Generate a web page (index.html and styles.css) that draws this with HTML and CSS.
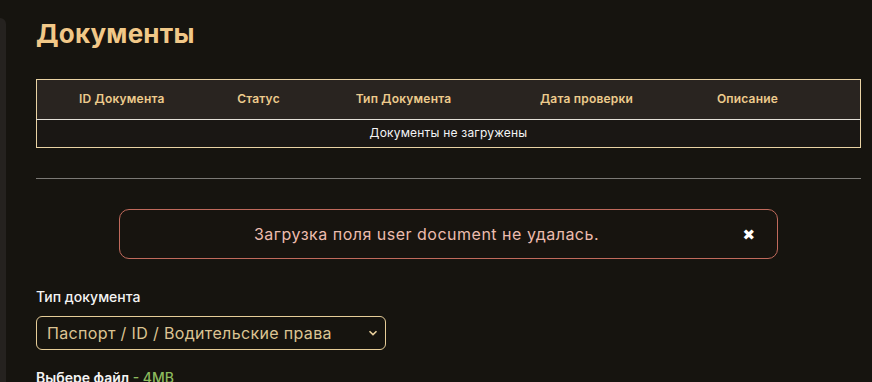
FILE: index.html
```html
<!doctype html>
<html>
    <head>
    <title>Документы</title>
    <meta charset="utf-8">
    <link rel="stylesheet" href="styles.css">
    </head>

    <body>
        <div class="page">
            <div class="side-edge"></div>
            <div class="content">
                <h1 class="page-title">Документы</h1>

                <table class="docs-table">
                    <colgroup>
                        <col class="col-id">
                        <col class="col-status">
                        <col class="col-type">
                        <col class="col-date">
                        <col class="col-desc">
                        <col class="col-act">
                    </colgroup>
                    <thead>
                        <tr>
                            <th>ID Документа</th>
                            <th>Статус</th>
                            <th>Тип Документа</th>
                            <th>Дата проверки</th>
                            <th>Описание</th>
                            <th></th>
                        </tr>
                    </thead>
                    <tbody>
                        <tr>
                            <td colspan="6">Документы не загружены</td>
                        </tr>
                    </tbody>
                </table>

                <hr class="divider">

                <div class="alert-row">
                    <div class="alert">
                        <span class="alert-text">Загрузка поля user document не удалась.</span>
                        <span class="alert-close">&#10006;</span>
                    </div>
                </div>

                <div class="field">
                    <label class="field-label">Тип документа</label>
                    <div class="slct-box">
                        <span class="slct-value">Паспорт / ID / Водительские права</span>
                        <svg class="slct-arrow" width="10" height="6" viewBox="0 0 10 6">
                            <path d="M1.5 1.2 L5 4.6 L8.5 1.2" fill="none" stroke="#e8cf9c" stroke-width="1.6"/>
                        </svg>
                    </div>
                </div>

                <div class="field">
                    <label class="field-label file-label">Выбере файл <span class="file-size">- 4MB</span></label>
                </div>
            </div>
        </div>
    </body>
</html>
```

FILE: styles.css
```css
html, body {
    margin: 0;
    height: 100%;
}

body {
    background: #16140f;
    font-family: Inter, "DejaVu Sans", sans-serif;
    color: #f2f2f2;
}

.page {
    display: flex;
    min-height: 100%;
}

.side-edge {
    width: 6px;
    flex: none;
    margin-top: 18px;
    background: #25221f;
    border-top-right-radius: 8px;
}

.content {
    flex: 1;
    padding: 0 11px 0 30px;
}

.page-title {
    margin: 16px 0 0;
    font-size: 26px;
    line-height: 36px;
    font-weight: 700;
    color: #f1c888;
    letter-spacing: 0.2px;
}

.docs-table {
    margin-top: 27px;
    width: 100%;
    border-collapse: collapse;
    table-layout: fixed;
    border: 1px solid #e9d3a4;
    font-size: 12px;
    letter-spacing: 0.2px;
}

.col-id { width: 170px; }
.col-status { width: 104px; }
.col-type { width: 186px; }
.col-date { width: 180px; }
.col-desc { width: 142px; }

.docs-table th {
    height: 36px;
    padding: 0 0 3px;
    background: #292420;
    color: #edcb8d;
    font-weight: 600;
    border-bottom: 1px solid #e4e0d8;
}

.docs-table td {
    height: 24px;
    padding: 0 0 3px;
    background: #1a1714;
    text-align: center;
    color: #f4f4f4;
}

.divider {
    margin: 30px 0 0;
    border: 0;
    height: 1px;
    background: #7b7975;
}

.alert-row {
    display: flex;
    justify-content: center;
    padding-top: 30px;
}

.alert {
    width: 657px;
    height: 48px;
    display: flex;
    align-items: center;
    border: 1px solid #c06a5c;
    border-radius: 10px;
    background: #17140f;
}

.alert-text {
    flex: 1;
    text-align: center;
    padding-left: 38px;
    font-size: 16px;
    letter-spacing: 0.5px;
    color: #ecbcae;
}

.alert-close {
    width: 60px;
    margin-right: 22px;
    text-align: right;
    font-size: 15px;
    color: #ffffff;
}

.field {
    display: flex;
    flex-direction: column;
}

.field-label {
    margin-top: 28px;
    font-size: 14px;
    font-weight: 500;
    line-height: 20px;
    color: #f3f3f3;
}

.slct-box {
    margin-top: 9px;
    width: 350px;
    height: 34px;
    box-sizing: border-box;
    display: flex;
    align-items: center;
    padding: 0 7px 0 10px;
    border: 1px solid #e6cd98;
    border-radius: 6px;
}

.slct-value {
    flex: 1;
    font-size: 16px;
    letter-spacing: 0.35px;
    color: #dcc493;
}

.file-label {
    margin-top: 18px;
    font-weight: 600;
}

.file-size {
    color: #8dbb5e;
    font-weight: 500;
}
```
